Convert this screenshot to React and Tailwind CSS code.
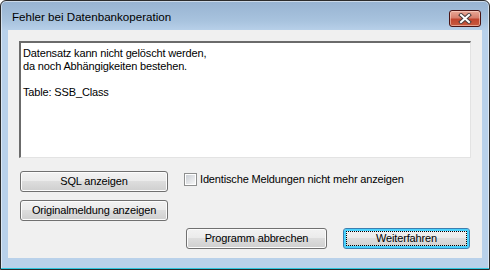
import React from "react";

/**
 * Win7Button
 * Classic Aero-basic push button with optional default (focused) state.
 */
function Win7Button({ label, width, isDefault = false }) {
  if (isDefault) {
    return (
      <div
        className="relative flex h-[21px] items-center justify-center rounded-[3px] border border-[#3c7fb1] shadow-[inset_0_0_0_2px_#48d1fd] bg-[linear-gradient(#f2f2f2_0%,#ebebeb_45%,#dddddd_50%,#cfcfcf_100%)]"
        style={{ width }}
      >
        <div className="pointer-events-none absolute inset-[2px] border border-dotted border-black" />
        <span className="relative text-[11px] leading-none text-black">{label}</span>
      </div>
    );
  }

  return (
    <div
      className="flex h-[21px] items-center justify-center rounded-[3px] border border-[#707070] shadow-[inset_0_0_0_1px_#fcfcfc] bg-[linear-gradient(#f2f2f2_0%,#ebebeb_45%,#dddddd_50%,#cfcfcf_100%)]"
      style={{ width }}
    >
      <span className="text-[11px] leading-none text-black">{label}</span>
    </div>
  );
}

/**
 * CloseButton
 * Red caption close button with outlined X.
 */
function CloseButton() {
  return (
    <div className="flex h-[17px] w-[32px] items-center justify-center rounded-[3px] border border-[#4a1414] shadow-[inset_0_0_0_1px_rgba(255,220,210,0.55)] bg-[linear-gradient(#e8a897_0%,#d7806e_45%,#c0452f_55%,#c85a3f_100%)]">
      <svg width="14" height="11" viewBox="0 0 14 11">
        <path d="M3 2 L11 9 M11 2 L3 9" stroke="#4b3d3d" strokeWidth="4" strokeLinecap="square" />
        <path d="M3 2 L11 9 M11 2 L3 9" stroke="#ffffff" strokeWidth="2" strokeLinecap="square" />
      </svg>
    </div>
  );
}

export default function App() {
  return (
    <div className="h-[270px] w-[490px] bg-white font-['Liberation_Sans',Tahoma,sans-serif]">
      <div className="flex h-full w-full flex-col rounded-t-[6px] border border-[#2b2b2b] bg-[linear-gradient(#97b3d1_0px,#a8c3de_20px,#b9d1ea_30px,#b9d1ea_100%)] shadow-[inset_0_0_0_1px_rgba(255,255,255,0.5)]">
        {/* Caption bar */}
        <div className="flex h-[29px] shrink-0 items-start justify-between">
          <span className="pl-[11px] pt-[9px] text-[11.6px] leading-[14px] text-black">
            Fehler bei Datenbankoperation
          </span>
          <div className="mr-[8px] mt-[9px]">
            <CloseButton />
          </div>
        </div>

        {/* Client area */}
        <div className="mx-[7px] flex h-[228px] flex-col bg-[#f0f0f0] text-[11px] tracking-[-0.15px] text-black">
          <div className="mx-[11px] mt-[11px] h-[117px] border-l-2 border-t-2 border-[#6b6b6b] border-b border-r border-b-[#e3e3e3] border-r-[#e3e3e3] bg-white px-[2px] pt-[4px] leading-[13px]">
            <p>Datensatz kann nicht gelöscht werden,</p>
            <p>da noch Abhängigkeiten bestehen.</p>
            <p>&nbsp;</p>
            <p>Table: SSB_Class</p>
          </div>

          <div className="flex flex-1 pb-[9px] pl-[12px] pr-[12px] pt-[13px]">
            <div className="flex flex-col gap-[8px]">
              <Win7Button label="SQL anzeigen" width={148} />
              <Win7Button label="Originalmeldung anzeigen" width={148} />
            </div>

            <div className="ml-[16px] flex flex-1 flex-col">
              <div className="mt-[2px] flex items-center gap-[3px]">
                <div className="flex h-[13px] w-[13px] items-center justify-center border border-[#8e8f8f] bg-white">
                  <div className="h-[9px] w-[9px] bg-[linear-gradient(135deg,#cbcfd5,#f6f6f6)]" />
                </div>
                <span className="leading-[13px]">Identische Meldungen nicht mehr anzeigen</span>
              </div>

              <div className="mt-auto flex justify-end gap-[16px]">
                <Win7Button label="Programm abbrechen" width={141} />
                <Win7Button label="Weiterfahren" width={127} isDefault />
              </div>
            </div>
          </div>
        </div>

        <div className="flex-1" />
        <div className="h-px shrink-0 bg-[#2fc6de]" />
      </div>
    </div>
  );
}
